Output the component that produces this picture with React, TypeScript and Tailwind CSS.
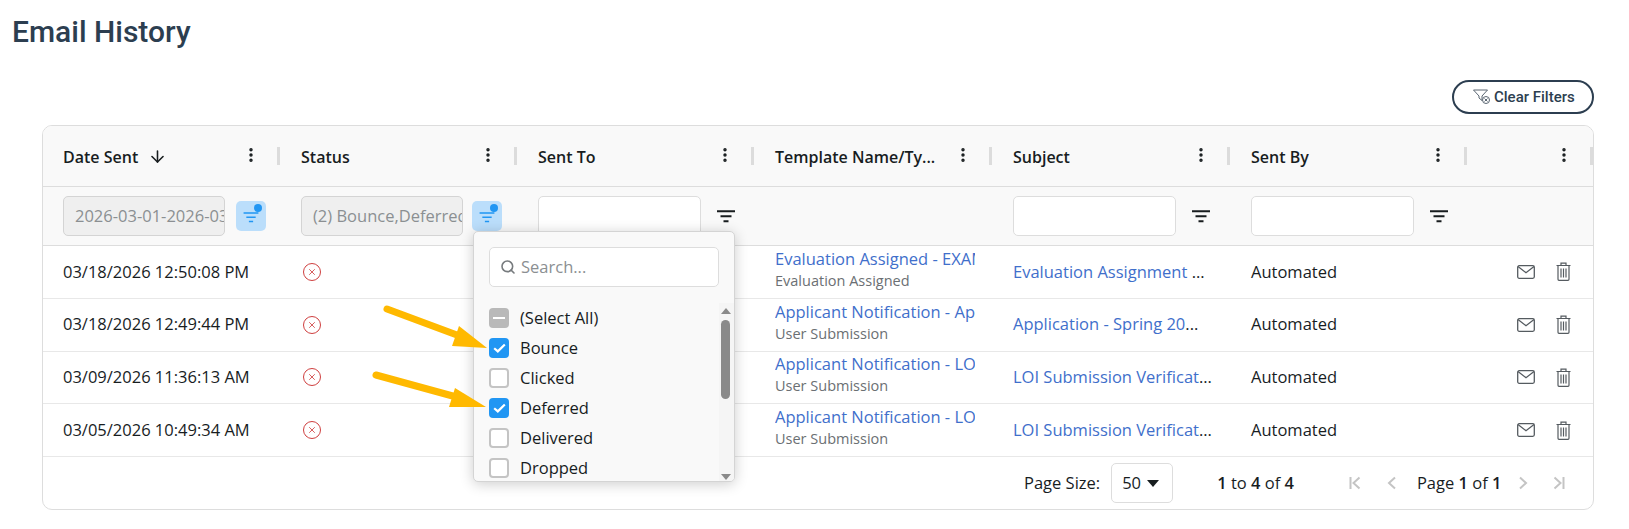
import { Search, ArrowDown, EllipsisVertical, X } from "lucide-react"

const COLS = "grid grid-cols-[237px_237px_237px_238px_238px_237px_1fr]"

const HEADERS = ["Date Sent", "Status", "Sent To", "Template Name/Ty...", "Subject", "Sent By", ""]

const ROWS = [
  {
    date: "03/18/2026 12:50:08 PM",
    template: "Evaluation Assigned - EXAMPLE",
    type: "Evaluation Assigned",
    subject: "Evaluation Assignment ",
  },
  {
    date: "03/18/2026 12:49:44 PM",
    template: "Applicant Notification - Application",
    type: "User Submission",
    subject: "Application - Spring 20",
  },
  {
    date: "03/09/2026 11:36:13 AM",
    template: "Applicant Notification - LOI Receipt",
    type: "User Submission",
    subject: "LOI Submission Verificat",
  },
  {
    date: "03/05/2026 10:49:34 AM",
    template: "Applicant Notification - LOI Receipt",
    type: "User Submission",
    subject: "LOI Submission Verificat",
  },
]

const OPTIONS = [
  { label: "(Select All)", state: "some" },
  { label: "Bounce", state: "on" },
  { label: "Clicked", state: "off" },
  { label: "Deferred", state: "on" },
  { label: "Delivered", state: "off" },
  { label: "Dropped", state: "off" },
]

function FilterLines({ className }: { className?: string }) {
  return (
    <svg width="18" height="13" viewBox="0 0 18 13" className={className}>
      <path d="M0 1.2h18M3.5 6.2h11M6.5 11.2h5" stroke="currentColor" strokeWidth="2" />
    </svg>
  )
}

function ActiveFilter() {
  return (
    <div className="relative flex h-[30px] w-[30px] shrink-0 items-center justify-center rounded-[5px] bg-[#bbdefb] text-[#2196f3]">
      <FilterLines className="mt-[2px] scale-[0.85]" />
      <span className="absolute right-[4px] top-[3px] h-[8px] w-[8px] rounded-full bg-[#2196f3]" />
    </div>
  )
}

function PlainFilter() {
  return <FilterLines className="ml-[16px] shrink-0 text-[#181d1f]" />
}

function ClearIcon() {
  return (
    <svg width="18" height="16" viewBox="0 0 18 16" fill="none" stroke="#5a6672" strokeWidth="1">
      <path d="M0.5 1h14l-5.5 6v4.5l-3-2.5V7z" />
      <circle cx="13" cy="11" r="3.5" fill="#fff" />
      <path d="M11.5 9.5l3 3M14.5 9.5l-3 3" />
    </svg>
  )
}

function MailIcon() {
  return (
    <svg width="18" height="14" viewBox="0 0 18 14" fill="none" stroke="#555b60" strokeWidth="1.3">
      <rect x="0.7" y="0.7" width="16.6" height="12.6" rx="1.5" />
      <path d="M1 1.5l8 6.2 8-6.2" />
    </svg>
  )
}

function TrashIcon() {
  return (
    <svg width="15" height="19" viewBox="0 0 15 19" fill="none" stroke="#555b60" strokeWidth="1.2">
      <path d="M0.5 3.5h14M5 3.2V1.2h5v2" />
      <path d="M2 3.5v13.8a1 1 0 0 0 1 1h9a1 1 0 0 0 1-1V3.5" />
      <path d="M5 6.5v9M7.5 6.5v9M10 6.5v9" />
    </svg>
  )
}

function PageIcon({ d, className }: { d: string; className?: string }) {
  return (
    <svg width="12" height="14" viewBox="0 0 12 14" fill="none" stroke="#c4c4c4" strokeWidth="2" className={className}>
      <path d={d} />
    </svg>
  )
}

function Check({ state }: { state: string }) {
  if (state === "on") {
    return (
      <span className="flex h-[20px] w-[20px] shrink-0 items-center justify-center rounded-[4px] bg-[#2196f3]">
        <svg width="13" height="10" viewBox="0 0 13 10" fill="none">
          <path d="M1.2 5.2l3.6 3.2L11.8 1.5" stroke="#fff" strokeWidth="2.2" />
        </svg>
      </span>
    )
  }
  if (state === "some") {
    return (
      <span className="flex h-[20px] w-[20px] shrink-0 items-center justify-center rounded-[4px] bg-[#b9b9b9]">
        <span className="h-[2px] w-[12px] bg-white" />
      </span>
    )
  }
  return <span className="h-[20px] w-[20px] shrink-0 rounded-[4px] border-2 border-[#c4c4c4] bg-white" />
}

function Arrow({ d, head }: { d: string; head: string }) {
  return (
    <>
      <path d={d} stroke="#ffb900" strokeWidth="7" strokeLinecap="round" fill="none" />
      <polygon points={head} fill="#ffb900" />
    </>
  )
}

export default function App() {
  return (
    <div className="relative h-[529px] w-[1629px] overflow-hidden bg-white font-['Open_Sans',sans-serif] text-[16.5px] text-[#181d1f]">
      <h1 className="pl-[12px] pt-[13px] font-['Roboto',sans-serif] text-[30px] font-medium leading-[38px] text-[#2c3e50]">
        Email History
      </h1>

      <div className="mr-[35px] mt-[29px] flex justify-end">
        <button className="flex h-[34px] w-[142px] items-center gap-[3px] rounded-full border-2 border-[#2c3e50] pl-[19px] font-['Roboto',sans-serif] text-[15px] font-medium text-[#2c3e50]">
          <ClearIcon />
          Clear Filters
        </button>
      </div>

      <div className="ml-[42px] mt-[11px] w-[1552px] overflow-hidden rounded-[10px] border border-[#dddddd]">
        {/* header */}
        <div className={`${COLS} h-[61px] border-b border-[#dddddd] bg-[#f9f9f9]`}>
          {HEADERS.map((h, i) => (
            <div key={i} className={`relative flex items-center pr-[20px] ${i === 0 ? "pl-[20px]" : "pl-[21px]"}`}>
              <span className="mt-[2px] whitespace-nowrap text-[16px] font-semibold">{h}</span>
              {i === 0 && <ArrowDown size={19} className="ml-[10px]" />}
              <EllipsisVertical size={18} strokeWidth={2.6} className="ml-auto -mt-[2px]" />
              <span className="absolute right-0 top-[21px] h-[18px] w-[3px] bg-[#dcdcdc]" />
            </div>
          ))}
        </div>

        {/* filter row */}
        <div className={`${COLS} h-[59px] border-b border-[#dddddd] bg-[#f9f9f9]`}>
          <div className="flex items-center gap-[11px] pl-[20px]">
            <div className="flex h-[40px] w-[162px] items-center overflow-hidden whitespace-nowrap rounded-[5px] border border-[#d4d4d4] bg-[#efefef] pl-[11px] text-[#8b8f92]">
              2026-03-01-2026-03-31
            </div>
            <ActiveFilter />
          </div>
          <div className="flex items-center gap-[9px] pl-[21px]">
            <div className="flex h-[40px] w-[162px] items-center overflow-hidden whitespace-nowrap rounded-[5px] border border-[#d4d4d4] bg-[#efefef] pl-[11px] text-[#8b8f92]">
              (2) Bounce,Deferred
            </div>
            <ActiveFilter />
          </div>
          <div className="flex items-center pl-[21px]">
            <div className="h-[40px] w-[163px] rounded-[5px] border border-[#dddddd] bg-white" />
            <PlainFilter />
          </div>
          <div />
          <div className="flex items-center pl-[21px]">
            <div className="h-[40px] w-[163px] rounded-[5px] border border-[#dddddd] bg-white" />
            <PlainFilter />
          </div>
          <div className="flex items-center pl-[21px]">
            <div className="h-[40px] w-[163px] rounded-[5px] border border-[#dddddd] bg-white" />
            <PlainFilter />
          </div>
          <div />
        </div>

        {/* rows */}
        {ROWS.map((r) => (
          <div key={r.date} className={`${COLS} h-[52.75px] border-b border-[#e8e8e8] last:border-[#dddddd]`}>
            <div className="flex items-center whitespace-nowrap pl-[20px]">{r.date}</div>
            <div className="flex items-center pl-[23px]">
              <span className="flex h-[18px] w-[18px] items-center justify-center rounded-full border border-[#cf3f3f] text-[#cf3f3f]">
                <X size={10} strokeWidth={2} />
              </span>
            </div>
            <div />
            <div className="flex flex-col justify-center overflow-hidden pb-[4px] pl-[21px] pr-[17px]">
              <div className="overflow-hidden whitespace-nowrap leading-[22px] text-[#3f6fcb]">{r.template}</div>
              <div className="whitespace-nowrap text-[14.5px] leading-[22px] text-[#6b6f73]">{r.type}</div>
            </div>
            <div className="flex items-center whitespace-pre pl-[21px]">
              <span className="text-[#3f6fcb]">{r.subject}</span>
              <span>...</span>
            </div>
            <div className="flex items-center pl-[21px]">Automated</div>
            <div className="flex items-center gap-[21px] pl-[50px]">
              <MailIcon />
              <TrashIcon />
            </div>
          </div>
        ))}

        {/* footer */}
        <div className="flex h-[52px] items-center pl-[981px]">
          <span className="whitespace-nowrap">Page Size:</span>
          <div className="ml-[11px] flex h-[40px] w-[62px] items-center rounded-[5px] border border-[#dddddd] pl-[10px]">
            50
            <span className="ml-[6px] h-0 w-0 border-x-[6px] border-t-[7px] border-x-transparent border-t-[#181d1f]" />
          </div>
          <span className="ml-[44px] whitespace-nowrap">
            <b className="font-semibold">1</b> to <b className="font-semibold">4</b> of <b className="font-semibold">4</b>
          </span>
          <div className="ml-[55px] flex items-center">
            <PageIcon d="M1.5 1v12M10.5 1.5L4.5 7l6 5.5" />
            <PageIcon d="M9 1.5L3 7l6 5.5" className="ml-[25px]" />
            <span className="ml-[19px] whitespace-nowrap">
              Page <b className="font-semibold">1</b> of <b className="font-semibold">1</b>
            </span>
            <PageIcon d="M3 1.5L9 7l-6 5.5" className="ml-[16px]" />
            <PageIcon d="M1.5 1.5L7.5 7l-6 5.5M10.5 1v12" className="ml-[24px]" />
          </div>
        </div>
      </div>

      {/* filter popup */}
      <div className="absolute left-[473px] top-[231px] h-[251px] w-[262px] overflow-hidden rounded-[5px] border border-[#d4d4d4] bg-[#f9f9f9] shadow-[0_2px_14px_rgba(0,0,0,0.2)]">
        <div className="ml-[15px] mt-[15px] flex h-[40px] w-[230px] items-center rounded-[5px] border border-[#dddddd] bg-white pl-[10px] text-[#8b8f92]">
          <Search size={16} strokeWidth={2.4} className="text-[#777b7e]" />
          <span className="ml-[5px] mt-[1px]">Search...</span>
        </div>
        <div className="relative mt-[16px] pl-[15px]">
          {OPTIONS.map((o) => (
            <div key={o.label} className="flex h-[30px] items-center gap-[11px]">
              <Check state={o.state} />
              <span>{o.label}</span>
            </div>
          ))}
          <div className="absolute right-0 top-0 h-[180px] w-[15px] bg-[#f5f5f5]">
            <span className="absolute left-[2px] top-[5px] h-0 w-0 border-x-[5px] border-b-[6px] border-x-transparent border-b-[#8a8a8a]" />
            <span className="absolute left-[2px] top-[17px] h-[79px] w-[9px] rounded-full bg-[#8a8a8a]" />
            <span className="absolute left-[2px] bottom-[3px] h-0 w-0 border-x-[5px] border-t-[6px] border-x-transparent border-t-[#8a8a8a]" />
          </div>
        </div>
      </div>

      {/* annotation arrows */}
      <svg className="pointer-events-none absolute left-0 top-0" width="1629" height="529">
        <Arrow d="M387 309L465 338" head="459,326 487,348 452,346" />
        <Arrow d="M376 375L460 398" head="455,388 486,407 449,407" />
      </svg>
    </div>
  )
}
